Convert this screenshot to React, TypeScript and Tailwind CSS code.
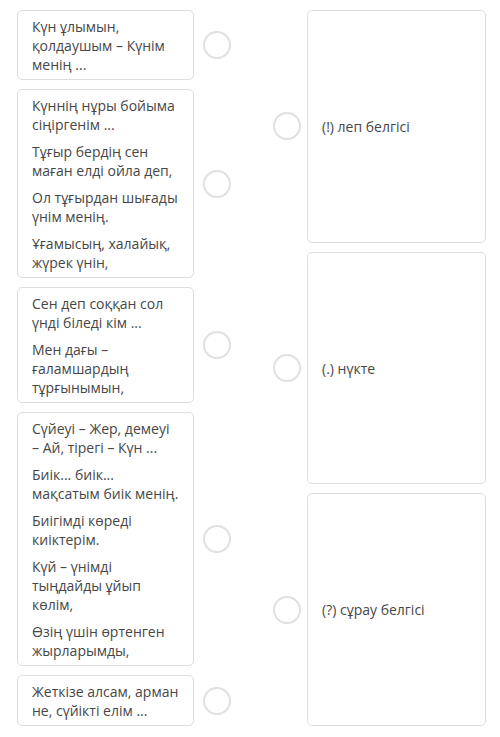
import React from "react";

const leftItems: React.ReactNode[][] = [
  ["Күн ұлымын, қолдаушым – Күнім менің ..."],
  [
    "Күннің нұры бойыма сіңіргенім ...",
    "Тұғыр бердің сен маған елді ойла деп,",
    "Ол тұғырдан шығады үнім менің.",
    "Ұғамысың, халайық, жүрек үнін,",
  ],
  ["Сен деп соққан сол үнді біледі кім ...", "Мен дағы – ғаламшардың тұрғынымын,"],
  [
    <>
      Сүйеуі – Жер, демеуі <span className="whitespace-nowrap">– Ай,</span> тірегі – Күн ...
    </>,
    "Биік... биік... мақсатым биік менің.",
    "Биігімді көреді киіктерім.",
    "Күй – үнімді тыңдайды ұйып көлім,",
    "Өзің үшін өртенген жырларымды,",
  ],
  ["Жеткізе алсам, арман не, сүйікті елім ..."],
];

const rightItems = ["(!) леп белгісі", "(.) нүкте", "(?) сұрау белгісі"];

function Radio() {
  return (
    <span className="block w-[28px] h-[28px] shrink-0 rounded-full border-2 border-[#e0e0e0] bg-white" />
  );
}

export default function App() {
  return (
    <div
      className="w-[500px] h-[737px] bg-white text-[14px] leading-[19px] text-[#474747]"
      style={{ fontFamily: '"Open Sans", "Noto Sans", sans-serif' }}
    >
      <div className="flex pt-[10px] pl-[17px] pr-[14px]">
        <div className="flex flex-col gap-[9px]">
          {leftItems.map((paras, i) => (
            <div key={i} className="flex items-center">
              <div className="w-[177px] shrink-0 rounded-[5px] border border-[#dedede] bg-white pl-[14px] pr-[12px] pt-[6px] pb-[5px] flex flex-col gap-[8px]">
                {paras.map((p, j) => (
                  <p key={j} className="text-wrap">
                    {p}
                  </p>
                ))}
              </div>
              <div className="ml-[9px]">
                <Radio />
              </div>
            </div>
          ))}
        </div>
        <div className="ml-auto flex flex-col gap-[9px]">
          {rightItems.map((t, i) => (
            <div key={i} className="flex-1 flex items-center">
              <Radio />
              <div className="ml-[6px] w-[179px] h-full rounded-[5px] border border-[#dedede] bg-white flex items-center pl-[14px] pr-[10px]">
                {t}
              </div>
            </div>
          ))}
        </div>
      </div>
    </div>
  );
}
